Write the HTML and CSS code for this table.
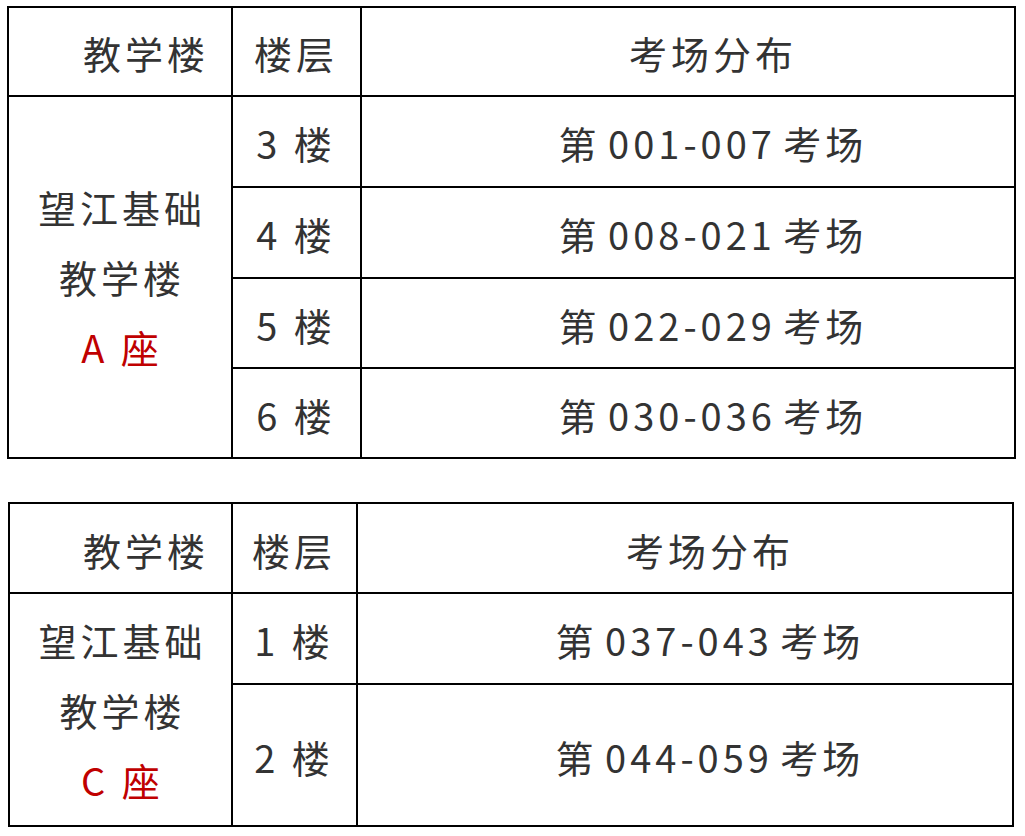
FILE: index.html
```html
<!DOCTYPE html>
<html lang="zh-CN">
<head>
<meta charset="utf-8">
<title>考场分布</title>
<link rel="stylesheet" href="styles.css">
</head>
<body>
<div class="grid grid-a">
  <div class="cell head-building">教学楼</div>
  <div class="cell floor">楼层</div>
  <div class="cell wide">考场分布</div>
  <div class="cell building span-a">
    <p>望江基础</p>
    <p>教学楼</p>
    <p class="red">A 座</p>
  </div>
  <div class="cell floor">3 楼</div>
  <div class="cell wide">第 001-007 考场</div>
  <div class="cell floor">4 楼</div>
  <div class="cell wide">第 008-021 考场</div>
  <div class="cell floor">5 楼</div>
  <div class="cell wide">第 022-029 考场</div>
  <div class="cell floor">6 楼</div>
  <div class="cell wide">第 030-036 考场</div>
</div>

<div class="grid grid-c">
  <div class="cell head-building">教学楼</div>
  <div class="cell floor">楼层</div>
  <div class="cell wide">考场分布</div>
  <div class="cell building span-c">
    <p>望江基础</p>
    <p>教学楼</p>
    <p class="red">C 座</p>
  </div>
  <div class="cell floor">1 楼</div>
  <div class="cell wide">第 037-043 考场</div>
  <div class="cell floor">2 楼</div>
  <div class="cell wide">第 044-059 考场</div>
</div>
</body>
</html>
```

FILE: styles.css
```css
html, body {
  margin: 0;
  background: #ffffff;
}

body {
  padding: 6px 0 0 7px;
  font-family: "Noto Sans CJK SC", sans-serif;
  color: #333333;
}

.grid {
  display: grid;
  background: #000000;
  padding: 2px;
  gap: 2px;
  width: max-content;
}

.grid-a {
  grid-template-columns: 222px 127px 652px;
  grid-template-rows: 87px 89px 89px 88px 88px;
}

.grid-c {
  margin: 43px 0 0 1px;
  grid-template-columns: 221px 123px 654px;
  grid-template-rows: 88px 89px 140px;
}

.cell {
  background: #ffffff;
  display: flex;
  align-items: center;
  justify-content: center;
  font-size: 38px;
  letter-spacing: 4px;
  line-height: 1;
  white-space: nowrap;
  padding-left: 4px;
  padding-top: 3px;
}

.floor {
  padding-left: 0;
  padding-right: 1px;
}

.wide {
  padding-left: 50px;
  word-spacing: -5px;
}

.head-building {
  justify-content: flex-end;
  padding-right: 22px;
}

.building {
  flex-direction: column;
  padding-top: 0;
}

.building p {
  margin: 0;
  height: 70px;
  line-height: 70px;
}

.span-a {
  grid-row: 2 / span 4;
}

.span-c {
  grid-row: 2 / span 2;
}

.red {
  color: #c00000;
}
```
